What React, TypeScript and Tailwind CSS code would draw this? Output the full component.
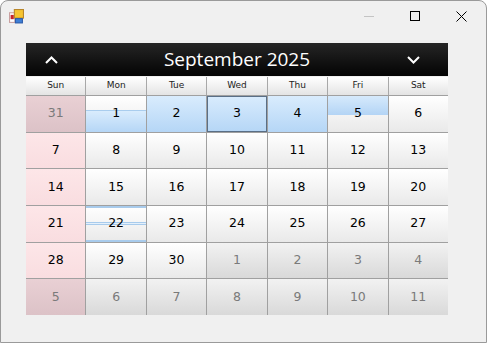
import React from "react";

type Kind = "normal" | "sun" | "outSun" | "out";

type Cell = {
  day: number;
  kind: Kind;
  sel?: "full" | "bottom" | "top";
  focus?: boolean;
  today?: boolean;
};

const days = ["Sun", "Mon", "Tue", "Wed", "Thu", "Fri", "Sat"];

function buildCells(): Cell[] {
  const cells: Cell[] = [];
  cells.push({ day: 31, kind: "outSun" });
  for (let d = 1; d <= 30; d++) {
    cells.push({ day: d, kind: d % 7 === 0 ? "sun" : "normal" });
  }
  for (let d = 1; d <= 11; d++) {
    cells.push({ day: d, kind: (30 + d) % 7 === 0 ? "outSun" : "out" });
  }
  cells[1].sel = "bottom";
  cells[2].sel = "full";
  cells[3].sel = "full";
  cells[3].focus = true;
  cells[4].sel = "full";
  cells[5].sel = "top";
  cells[22].today = true;
  return cells;
}

const bgByKind: Record<Kind, string> = {
  normal: "bg-gradient-to-b from-white to-[#e9e9e9]",
  sun: "bg-gradient-to-b from-[#fde6e8] to-[#f9dde0]",
  outSun: "bg-gradient-to-b from-[#e9d0d4] to-[#dcc2c7]",
  out: "bg-gradient-to-b from-[#f2f2f2] to-[#d9d9d9]",
};

function DayCell({ cell }: { cell: Cell }) {
  const textColor = cell.kind === "out" || cell.kind === "outSun" ? "text-[#7a7a7a]" : "text-black";
  return (
    <div className={`relative flex items-center justify-center ${bgByKind[cell.kind]}`}>
      {cell.sel === "full" && (
        <div className="absolute inset-0 bg-gradient-to-b from-[#d9ecfd] to-[#b5d6f6]" />
      )}
      {cell.sel === "bottom" && (
        <div className="absolute inset-x-0 bottom-0 top-[14px] border-t border-[#a9cdee] bg-gradient-to-b from-[#d9ecfd] to-[#b5d6f6]" />
      )}
      {cell.sel === "top" && (
        <div className="absolute inset-x-0 top-0 h-[19px] bg-gradient-to-b from-[#d6eafc] to-[#b3d4f5]" />
      )}
      {cell.focus && <div className="absolute inset-0 border border-[#5a6f86]" />}
      {cell.today && (
        <>
          <div className="absolute inset-x-0 top-0 h-[2px] bg-[#a8cbec]" />
          <div className="absolute inset-x-0 top-[16px] h-[3px] border-y border-[#a8cbec] bg-[#e4f0fb]" />
          <div className="absolute inset-x-0 bottom-0 h-[2px] bg-[#a8cbec]" />
        </>
      )}
      <span className={`relative text-[12.5px] ${textColor}`}>{cell.day}</span>
    </div>
  );
}

function AppIcon() {
  return (
    <svg width="15" height="15" viewBox="0 0 14 14">
      <rect x="0.5" y="3.5" width="5" height="9" fill="#fff" stroke="#c9a0a0" />
      <rect x="1.5" y="5.5" width="3" height="4" fill="#c8242c" />
      <rect x="5" y="0.5" width="8.5" height="8" fill="#f6c431" stroke="#b8862a" />
      <rect x="6" y="9" width="6.5" height="4" fill="#3f7fd6" stroke="#2a5aa8" />
    </svg>
  );
}

export default function App() {
  const cells = buildCells();
  return (
    <div
      className="w-[487px] h-[343px] overflow-hidden rounded-t-[8px] border border-[#9a9a9a] bg-[#f0f0f0]"
      style={{ fontFamily: '"DejaVu Sans", Verdana, sans-serif' }}
    >
      {/* title bar */}
      <div className="flex h-[30px] items-center">
        <div className="ml-[8px] mt-[1px]">
          <AppIcon />
        </div>
        <div className="ml-auto flex items-center">
          <div className="flex w-[46px] justify-center">
            <div className="h-px w-[10px] bg-[#c4c4c4]" />
          </div>
          <div className="flex w-[46px] justify-center">
            <div className="h-[10px] w-[10px] border border-black" />
          </div>
          <div className="mr-[2px] flex w-[46px] justify-center">
            <svg width="11" height="11" viewBox="0 0 11 11">
              <path d="M0.5 0.5 L10.5 10.5 M10.5 0.5 L0.5 10.5" stroke="#000" strokeWidth="1" />
            </svg>
          </div>
        </div>
      </div>

      {/* calendar */}
      <div className="ml-[25px] mt-[12px] w-[422px]">
        <div className="grid h-[33px] grid-cols-[1fr_auto_1fr] items-center bg-gradient-to-b from-[#262626] to-[#050505]">
          <svg className="ml-[19px]" width="13" height="8" viewBox="0 0 13 8">
            <path d="M1 7 L6.5 1.5 L12 7" fill="none" stroke="#fff" strokeWidth="2" />
          </svg>
          <span
            className="text-[19px] leading-none text-white"
            style={{ fontFamily: '"Open Sans", "Noto Sans", sans-serif' }}
          >
            September 2025
          </span>
          <svg className="mr-[28px] justify-self-end" width="13" height="8" viewBox="0 0 13 8">
            <path d="M1 1 L6.5 6.5 L12 1" fill="none" stroke="#fff" strokeWidth="2" />
          </svg>
        </div>
        <div className="mt-px grid h-[18px] grid-cols-7 gap-px bg-[#a8a8a8]">
          {days.map((d) => (
            <div
              key={d}
              className="flex items-center justify-center bg-gradient-to-b from-white to-[#e4e4e4] text-[9px] text-[#222]"
            >
              {d}
            </div>
          ))}
        </div>
        <div className="grid h-[220px] grid-cols-7 grid-rows-6 gap-px bg-[#a0a0a0] pt-px">
          {cells.map((c, i) => (
            <DayCell key={i} cell={c} />
          ))}
        </div>
      </div>
    </div>
  );
}
